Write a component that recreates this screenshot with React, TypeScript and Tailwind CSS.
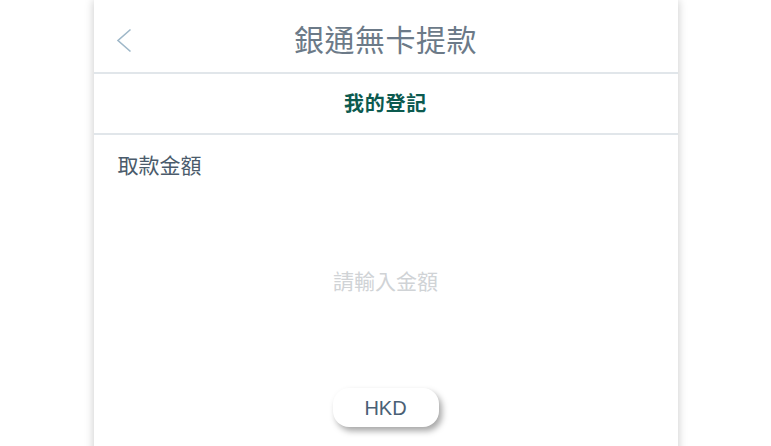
import React from 'react';

const font = "font-['Liberation_Sans','Noto_Sans_CJK_TC',sans-serif]";

const App: React.FC = () => {
  return (
    <div className={`w-full h-[446px] overflow-hidden bg-white ${font}`}>
      <div className="mx-auto w-[584px] h-[480px] bg-white shadow-[0_0_9px_rgba(0,0,0,0.22)] flex flex-col">
        {/* header */}
        <div className="relative h-[74px] flex items-center justify-center border-b-2 border-[#e1e6ea]">
          <svg className="absolute left-[22px] top-[28px]" width="16" height="25" viewBox="0 0 16 25" fill="none">
            <path d="M14.5 1.5L2 12.5L14.5 23.5" stroke="#9fb8c9" strokeWidth="1.6" />
          </svg>
          <h1 className="text-[30px] leading-none text-[#6c7a88] tracking-[0.5px] mt-[9px]">銀通無卡提款</h1>
        </div>

        <div className="h-[61px] flex items-center justify-center border-b-2 border-[#e1e6ea]">
          <span className="text-[20px] font-bold text-[#0c5a4f] leading-none tracking-[0.8px]">我的登記</span>
        </div>

        <div className="flex-1 flex flex-col px-[24px]">
          <div className="pt-[20px] text-[21px] leading-none text-[#4b5b6b]">取款金額</div>
          <div className="mt-[95px] text-center text-[21px] leading-none text-[#d0d3d6]">請輸入金額</div>
          <div className="mt-[96px] flex justify-center">
            <button className="w-[106px] h-[39px] rounded-[16px] bg-white text-[20px] text-[#4a6075] shadow-[3px_4px_6px_rgba(0,0,0,0.35)]">
              HKD
            </button>
          </div>
        </div>
      </div>
    </div>
  );
};

export default App;
